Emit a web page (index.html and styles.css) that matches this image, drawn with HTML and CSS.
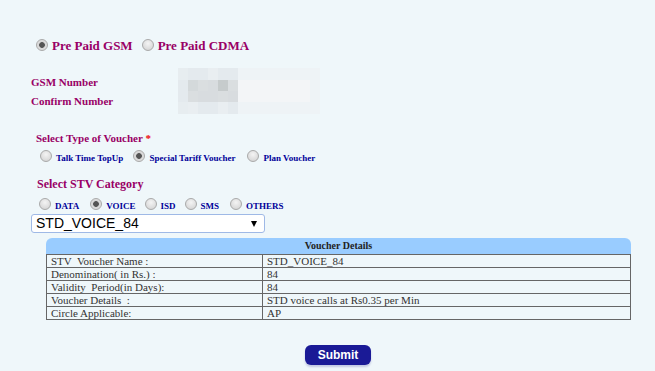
FILE: index.html
```html
<!DOCTYPE html>
<html>
<head>
<meta charset="utf-8">
<link rel="stylesheet" href="styles.css">
</head>
<body>
<div class="page">
  <div class="plan-row">
    <label class="opt big"><input type="radio" name="plan" checked><span>Pre Paid GSM</span></label>
    <label class="opt big"><input type="radio" name="plan"><span>Pre Paid CDMA</span></label>
  </div>

  <div class="numbers">
    <div class="num-labels">
      <div>GSM Number</div>
      <div>Confirm Number</div>
    </div>
    <div class="mosaic">
      <div class="tiles">
        <i class="t1"></i><i class="t2"></i><i class="t2"></i><i class="t3"></i><i class="t2"></i><i class="t2"></i>
        <i class="t2"></i><i class="t4"></i><i class="t5"></i><i class="t6"></i><i class="t7"></i><i class="t5"></i>
        <i class="t2"></i><i class="t5"></i><i class="t6"></i><i class="t6"></i><i class="t5"></i><i class="t6"></i>
        <i class="t1"></i><i class="t3"></i><i class="t2"></i><i class="t2"></i><i class="t3"></i><i class="t2"></i>
      </div>
      <div class="blank"><div class="blank-inner"></div></div>
    </div>
  </div>

  <div class="heading small-head">Select Type of Voucher <span class="req">*</span></div>
  <div class="radio-row type-row">
    <label class="opt"><input type="radio" name="vt"><span>Talk Time TopUp</span></label>
    <label class="opt"><input type="radio" name="vt" checked><span>Special Tariff Voucher</span></label>
    <label class="opt"><input type="radio" name="vt"><span>Plan Voucher</span></label>
  </div>

  <div class="heading stv-head">Select STV Category</div>
  <div class="radio-row cat-row">
    <label class="opt"><input type="radio" name="cat"><span>DATA</span></label>
    <label class="opt"><input type="radio" name="cat" checked><span>VOICE</span></label>
    <label class="opt"><input type="radio" name="cat"><span>ISD</span></label>
    <label class="opt"><input type="radio" name="cat"><span>SMS</span></label>
    <label class="opt"><input type="radio" name="cat"><span>OTHERS</span></label>
  </div>

  <div class="select-wrap">
    <select class="sel"><option>STD_VOICE_84</option></select>
  </div>

  <div class="details">
    <div class="ribbon">Voucher Details</div>
    <table class="vtable">
      <tr><td class="k">STV&nbsp; Voucher Name :</td><td>STD_VOICE_84</td></tr>
      <tr><td class="k">Denomination( in Rs.) :</td><td>84</td></tr>
      <tr><td class="k">Validity&nbsp; Period(in Days):</td><td>84</td></tr>
      <tr><td class="k">Voucher Details&nbsp; :</td><td>STD voice calls at Rs0.35 per Min</td></tr>
      <tr><td class="k">Circle Applicable:</td><td>AP</td></tr>
    </table>
  </div>

  <div class="submit-row">
    <button class="submit">Submit</button>
  </div>
</div>
</body>
</html>
```
FILE: styles.css
```css
html, body {
  margin: 0;
  padding: 0;
  background: #eff7fa;
}
body {
  width: 655px;
  height: 371px;
  overflow: hidden;
  font-family: "Liberation Serif", "Times New Roman", serif;
}
.page {
  padding-top: 38px;
}
.opt {
  display: inline-flex;
  align-items: center;
  font-weight: bold;
  color: #000099;
  font-size: 9px;
}
.opt span {
  position: relative;
  top: 2px;
}
.opt input {
  appearance: none;
  -webkit-appearance: none;
  width: 12px;
  height: 12px;
  margin: 0 4px 0 0;
  border-radius: 50%;
  border: 1px solid #a9a9a9;
  background: radial-gradient(circle at 50% 35%, #f4f4f4 0%, #dedede 60%, #cfcfcf 100%);
  box-sizing: border-box;
  flex: none;
}
.opt input:checked {
  background: radial-gradient(circle, #555 0, #555 2.5px, #d6d6d6 3.2px, #e8e8e8 100%);
}
.plan-row {
  display: flex;
  gap: 9px;
  padding-left: 36px;
  height: 14px;
  align-items: center;
}
.opt.big {
  font-size: 13px;
  color: #990066;
}
.opt.big span { top: 1px; }
.numbers {
  display: flex;
  margin-top: 16px;
  padding-left: 31px;
  height: 46px;
}
.num-labels {
  width: 147px;
  padding-top: 5px;
  font-weight: bold;
  font-size: 11px;
  color: #990066;
  line-height: 19px;
}
.mosaic {
  display: flex;
  width: 142px;
  height: 46px;
}
.tiles {
  display: grid;
  grid-template-columns: repeat(6, 10px);
  grid-template-rows: 12px 11px 11px 12px;
  width: 60px;
}
.tiles i { display: block; }
.t1 { background: #e7edf0; }
.t2 { background: #e4eaee; }
.t3 { background: #e9eef1; }
.t4 { background: #d4d9db; }
.t5 { background: #dadee0; }
.t6 { background: #d8dcdf; }
.t7 { background: #c6cbcc; }
.blank {
  width: 82px;
  background: #eef3f6;
  padding: 12px 10px 12px 0;
  box-sizing: border-box;
}
.blank-inner {
  height: 22px;
  background: #f3f5f7;
}
.heading {
  font-weight: bold;
  color: #990066;
}
.small-head {
  margin-top: 17px;
  padding-left: 36px;
  font-size: 11px;
  line-height: 14px;
}
.req { color: #ee0000; }
.radio-row {
  display: flex;
  align-items: center;
  height: 14px;
}
.type-row {
  margin-top: 4px;
  padding-left: 40px;
}
.type-row .opt:nth-child(1) { margin-right: 10px; }
.type-row .opt:nth-child(2) { margin-right: 12px; }
.stv-head {
  margin-top: 14px;
  padding-left: 37px;
  font-size: 12px;
  line-height: 14px;
}
.cat-row {
  margin-top: 6px;
  padding-left: 39px;
}
.cat-row .opt:nth-child(1) { margin-right: 11px; }
.cat-row .opt:nth-child(2) { margin-right: 9px; }
.cat-row .opt:nth-child(3) { margin-right: 9px; }
.cat-row .opt:nth-child(4) { margin-right: 11px; }
.select-wrap {
  position: relative;
  margin: 3px 0 0 31px;
  width: 234px;
  height: 19px;
}
.sel {
  appearance: none;
  -webkit-appearance: none;
  width: 234px;
  height: 19px;
  border: 1px solid #9fb9e6;
  border-radius: 3px;
  background: #ffffff;
  font-family: "Liberation Sans", Arial, sans-serif;
  font-size: 14px;
  color: #000;
  padding: 0 0 0 4px;
  line-height: 17px;
  box-sizing: border-box;
}
.select-wrap::after {
  content: "";
  position: absolute;
  right: 8px;
  top: 7px;
  border-left: 3.5px solid transparent;
  border-right: 3.5px solid transparent;
  border-top: 6px solid #000;
}
.details {
  margin: 5px 0 0 46px;
  width: 585px;
}
.ribbon {
  height: 16px;
  background: #99ccff;
  border-radius: 6px 6px 0 0;
  text-align: center;
  font-weight: bold;
  font-size: 10px;
  line-height: 16px;
  color: #222;
}
.vtable {
  width: 585px;
  border-collapse: collapse;
  border: 1px solid #222;
  font-size: 11px;
  color: #333;
}
.vtable td {
  border: 1px solid #666;
  height: 12px;
  padding: 0 0 0 4px;
  line-height: 12px;
}
.vtable td.k { width: 211px; }
.submit-row {
  display: flex;
  justify-content: flex-start;
  padding-left: 305px;
  margin-top: 25px;
}
.submit {
  width: 66px;
  height: 20px;
  background: #1a1a96;
  color: #fff;
  border: none;
  border-radius: 6px;
  font-family: "Liberation Sans", Arial, sans-serif;
  font-weight: bold;
  font-size: 12px;
  padding: 0;
  box-shadow: 0 2px 2px rgba(60, 60, 160, 0.25);
}
```
